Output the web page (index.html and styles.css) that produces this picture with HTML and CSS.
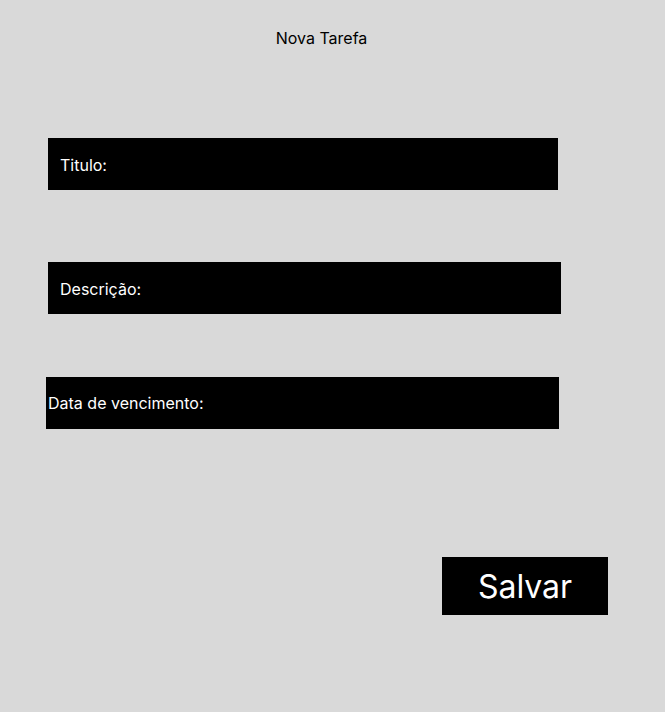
FILE: index.html
```html
<!DOCTYPE html>
<html lang="pt">
<head>
<meta charset="utf-8">
<title>Nova Tarefa</title>
<link rel="stylesheet" href="styles.css">
</head>
<body>
<main class="page">
  <h1 class="title">Nova Tarefa</h1>
  <div class="form">
    <div class="field field-titulo">Titulo:</div>
    <div class="field field-desc">Descrição:</div>
    <div class="field field-data">Data de vencimento:</div>
    <button class="save">Salvar</button>
  </div>
</main>
</body>
</html>
```

FILE: styles.css
```css
html, body {
  margin: 0;
  padding: 0;
  background: #d9d9d9;
}
body {
  font-family: Inter, "Noto Sans", sans-serif;
  color: #000;
  width: 665px;
  height: 712px;
  overflow: hidden;
}
.page {
  display: flex;
  flex-direction: column;
}
.title {
  margin: 0;
  padding-top: 28px;
  width: 643px;
  text-align: center;
  font-size: 16px;
  font-weight: 400;
  line-height: 20px;
}
.form {
  display: flex;
  flex-direction: column;
  align-items: flex-start;
  margin-top: 90px;
}
.field {
  background: #000;
  color: #fff;
  height: 52px;
  display: flex;
  align-items: center;
  font-size: 16px;
  box-sizing: border-box;
  padding-top: 2px;
}
.field-titulo {
  margin-left: 48px;
  width: 510px;
  padding-left: 12px;
}
.field-desc {
  margin-top: 72px;
  margin-left: 48px;
  width: 513px;
  padding-left: 12px;
}
.field-data {
  margin-top: 63px;
  margin-left: 46px;
  width: 513px;
  padding-left: 2px;
  padding-top: 0;
}
.save {
  margin-top: 128px;
  margin-left: 442px;
  width: 166px;
  height: 58px;
  border: 0;
  border-radius: 0;
  background: #000;
  color: #fff;
  font-family: Inter, "Noto Sans", sans-serif;
  font-size: 32px;
  font-weight: 400;
  padding: 0;
  cursor: pointer;
}
```
